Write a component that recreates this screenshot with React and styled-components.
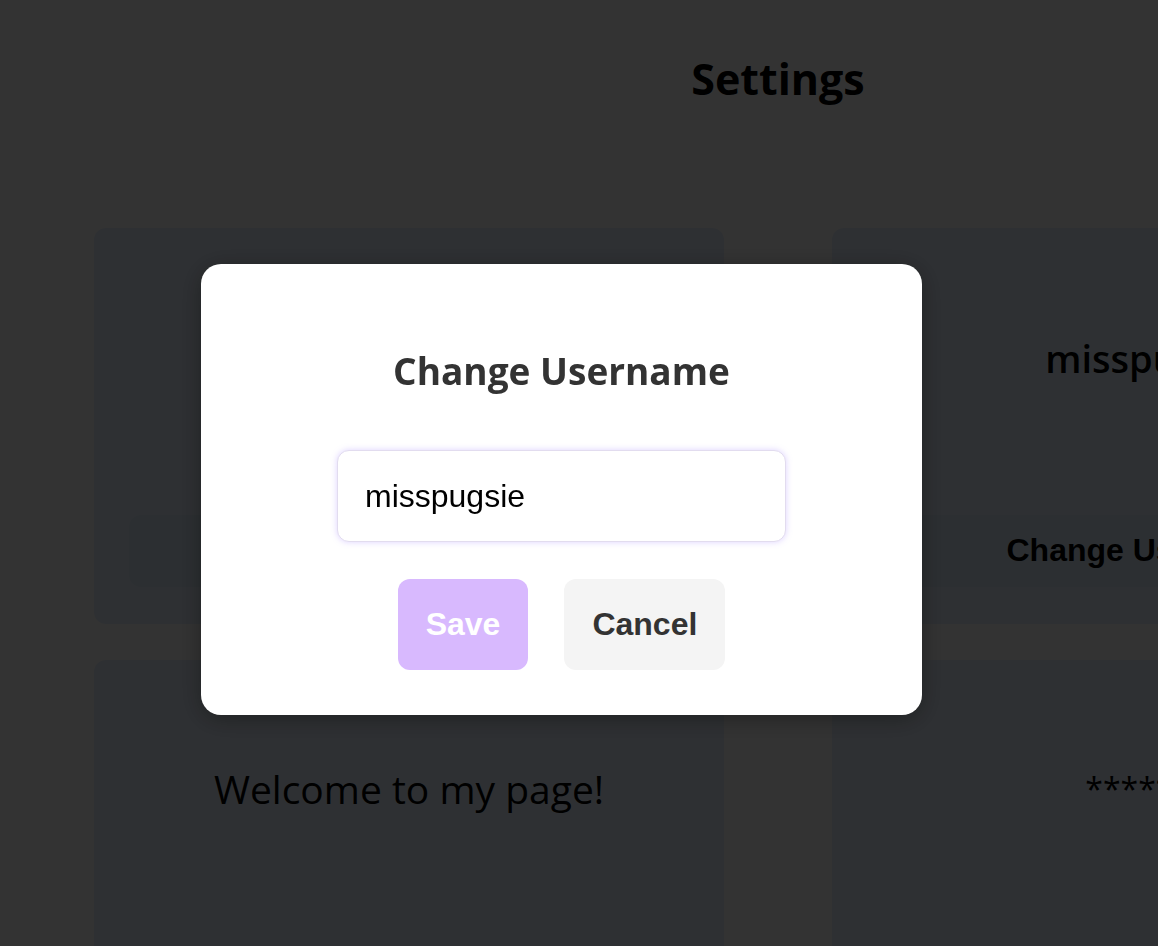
import { useState } from "react";
import styled, { createGlobalStyle } from "styled-components";

const GlobalStyle = createGlobalStyle`
    html, body {
        margin: 0;
        padding: 0;
        overflow: hidden;
        background: #fff;
    }
    body {
        font-family: "Open Sans", "Noto Sans", sans-serif;
    }
`;

const Page = styled.div`
    width: 1556px;
    min-height: 946px;
    display: flex;
    flex-direction: column;
    align-items: center;
`;

const Title = styled.h1`
    margin: 53px 0 0;
    font-size: 43px;
    line-height: 1.2;
    font-weight: 700;
    color: #000;
`;

const Grid = styled.div`
    margin-top: 123px;
    display: grid;
    grid-template-columns: 630px 630px;
    grid-auto-rows: 396px;
    column-gap: 108px;
    row-gap: 36px;
`;

const Card = styled.div`
    background: #e6f0ff;
    border-radius: 12px;
    padding: 35px 35px 37px;
    display: flex;
    flex-direction: column;
    align-items: center;
    box-sizing: border-box;
`;

const Avatar = styled.div`
    width: 190px;
    height: 190px;
    margin-top: 4px;
    border-radius: 50%;
    background: #8a3a3a;
`;

const Value = styled.p`
    margin: ${({ $small, $bold }) =>
            $small ? "72px" : $bold ? "69px" : "67px"}
        0 0;
    font-size: ${({ $bold, $small }) =>
        $small ? "32px" : $bold ? "38px" : "39px"};
    font-weight: ${({ $bold }) => ($bold ? 600 : 400)};
    line-height: 1.4;
    color: #000;
`;

const Spacer = styled.div`
    flex: 1;
`;

const CardButton = styled.button`
    width: 100%;
    height: 72px;
    border: none;
    border-radius: 12px;
    background: #dcebfa;
    font-family: "Liberation Sans", Arial, sans-serif;
    font-weight: 700;
    font-size: 32px;
    color: #000;
`;

const Overlay = styled.div`
    position: fixed;
    inset: 0;
    background: rgba(0, 0, 0, 0.8);
`;

const Modal = styled.div`
    position: absolute;
    left: 201px;
    top: 264px;
    width: 721px;
    height: 451px;
    box-sizing: border-box;
    padding: 83px 0 0;
    background: #fff;
    border-radius: 20px;
    box-shadow: 0 4px 24px rgba(0, 0, 0, 0.35);
    display: flex;
    flex-direction: column;
    align-items: center;
`;

const ModalTitle = styled.h2`
    margin: 0;
    font-size: 37px;
    line-height: 48px;
    font-weight: 700;
    color: #333;
`;

const Input = styled.input`
    margin-top: 55px;
    width: 449px;
    height: 92px;
    box-sizing: border-box;
    padding: 0 27px;
    border: 1px solid #e2dcef;
    border-radius: 12px;
    box-shadow: 0 0 6px rgba(160, 130, 255, 0.35);
    font-family: "Liberation Sans", Arial, sans-serif;
    font-size: 32px;
    color: #000;
    outline: none;
`;

const Actions = styled.div`
    margin-top: 37px;
    display: flex;
    gap: 36px;
`;

const ModalButton = styled.button`
    height: 91px;
    padding: 0 28px;
    border: none;
    border-radius: 12px;
    background: ${({ $primary }) => ($primary ? "#d8b9fe" : "#f4f4f4")};
    color: ${({ $primary }) => ($primary ? "#fff" : "#333")};
    font-family: "Liberation Sans", Arial, sans-serif;
    font-weight: 700;
    font-size: 32px;
    cursor: pointer;
`;

function App() {
    const [username, setUsername] = useState("misspugsie");

    return (
        <>
            <GlobalStyle />
            <Page>
                <Title>Settings</Title>
                <Grid>
                    <Card>
                        <Avatar />
                        <Spacer />
                        <CardButton>Change Profile Picture</CardButton>
                    </Card>
                    <Card>
                        <Value $bold>misspugsie</Value>
                        <Spacer />
                        <CardButton>Change Username</CardButton>
                    </Card>
                    <Card>
                        <Value>Welcome to my page!</Value>
                        <Spacer />
                        <CardButton>Change Bio</CardButton>
                    </Card>
                    <Card>
                        <Value $small>*******</Value>
                        <Spacer />
                        <CardButton>Change Password</CardButton>
                    </Card>
                </Grid>
            </Page>
            <Overlay>
                <Modal>
                    <ModalTitle>Change Username</ModalTitle>
                    <Input
                        value={username}
                        onChange={(e) => setUsername(e.target.value)}
                    />
                    <Actions>
                        <ModalButton $primary>Save</ModalButton>
                        <ModalButton>Cancel</ModalButton>
                    </Actions>
                </Modal>
            </Overlay>
        </>
    );
}

export default App;
